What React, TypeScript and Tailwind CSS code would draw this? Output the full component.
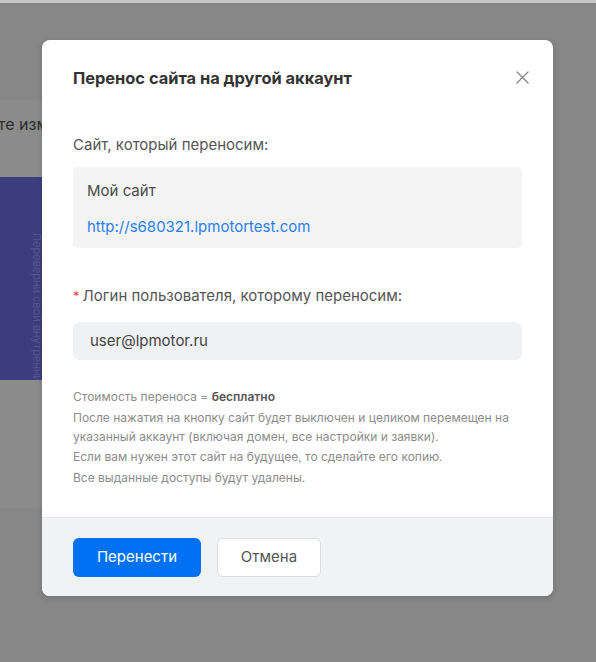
import React from "react";

export default function App() {
  return (
    <div
      className="relative h-[662px] w-[596px] overflow-hidden bg-[#878788]"
      style={{ fontFamily: "Inter, 'Noto Sans', sans-serif" }}
    >
      {/* underlying page (dimmed) */}
      <div className="h-[3px] bg-[#c6c6c7]" />
      <div className="mt-[97px] w-[500px] bg-[#8b8b8b] pb-[128px]">
        <div className="flex h-[48px] items-center overflow-hidden">
          <span className="-ml-[2px] whitespace-nowrap text-[16px] text-[#2e2e2e]">
            те изменения
          </span>
        </div>
        <div className="mt-[29px] flex h-[203px] overflow-hidden bg-[#3d3d7d]">
          <div className="ml-[28px] flex items-start pt-[56px]">
            <span
              className="whitespace-nowrap text-[11px] text-[#56568f]"
              style={{ writingMode: "vertical-rl" }}
            >
              Переверни свой внутренний мир
            </span>
          </div>
        </div>
      </div>

      {/* overlay modal */}
      <div className="absolute left-[42px] top-[40px] flex h-[556px] w-[511px] flex-col overflow-hidden rounded-[8px] bg-white shadow-[0_2px_6px_rgba(0,0,0,0.15)]">
        <div className="flex flex-1 flex-col px-[31px] pt-[26px]">
          <div className="flex items-center justify-between">
            <h2 className="text-[16.4px] font-bold leading-[24px] text-[#333]">
              Перенос сайта на другой аккаунт
            </h2>
            <button className="-mr-[10px] -mt-[2px] flex h-[20px] w-[20px] items-center justify-center text-[#8a8a8a]">
              <svg width="13" height="13" viewBox="0 0 13 13" fill="none">
                <path d="M1 1L12 12M12 1L1 12" stroke="currentColor" strokeWidth="1.4" strokeLinecap="round" />
              </svg>
            </button>
          </div>

          <div className="mt-[44px] text-[15px] leading-[22px] text-[#555]">
            Сайт, который переносим:
          </div>
          <div className="mt-[11px] flex h-[81px] flex-col gap-[14px] rounded-[5px] bg-[#f4f4f4] pl-[14px] pt-[13px] text-[15px] leading-[22px]">
            <span className="text-[#4a4a4a]">Мой сайт</span>
            <a className="text-[#2a7ff0]">http://s680321.lpmotortest.com</a>
          </div>

          <div className="mt-[37px] flex items-center text-[15px] leading-[22px] text-[#555]">
            <span className="mr-[3px] text-[13px] text-[#e84545]">*</span>
            Логин пользователя, которому переносим:
          </div>
          <div className="mt-[15px] flex h-[38px] items-center rounded-[7px] bg-[#f0f1f3] pl-[17px] text-[15px] text-[#444]">
            user@lpmotor.ru
          </div>

          <div className="mt-[27px] text-[12px] leading-[19px] text-[#8c8c8c]">
            <p>
              Стоимость переноса = <b className="font-semibold text-[#555]">бесплатно</b>
            </p>
            <p className="mt-[1.5px]">
              После нажатия на кнопку сайт будет выключен и целиком перемещен на указанный аккаунт (включая домен, все настройки и заявки).
            </p>
            <p className="mt-[1.5px]">Если вам нужен этот сайт на будущее, то сделайте его копию.</p>
            <p className="mt-[1.5px]">Все выданные доступы будут удалены.</p>
          </div>
        </div>

        <div className="flex h-[79px] gap-[16px] border-t border-[#e7e8eb] bg-[#f1f2f4] px-[31px] pt-[20px]">
          <button className="h-[39px] w-[128px] rounded-[6px] bg-[#0071f2] text-[15px] text-white">
            Перенести
          </button>
          <button className="h-[39px] w-[104px] rounded-[6px] border border-[#dcdde0] bg-white text-[15px] text-[#555]">
            Отмена
          </button>
        </div>
      </div>
    </div>
  );
}
